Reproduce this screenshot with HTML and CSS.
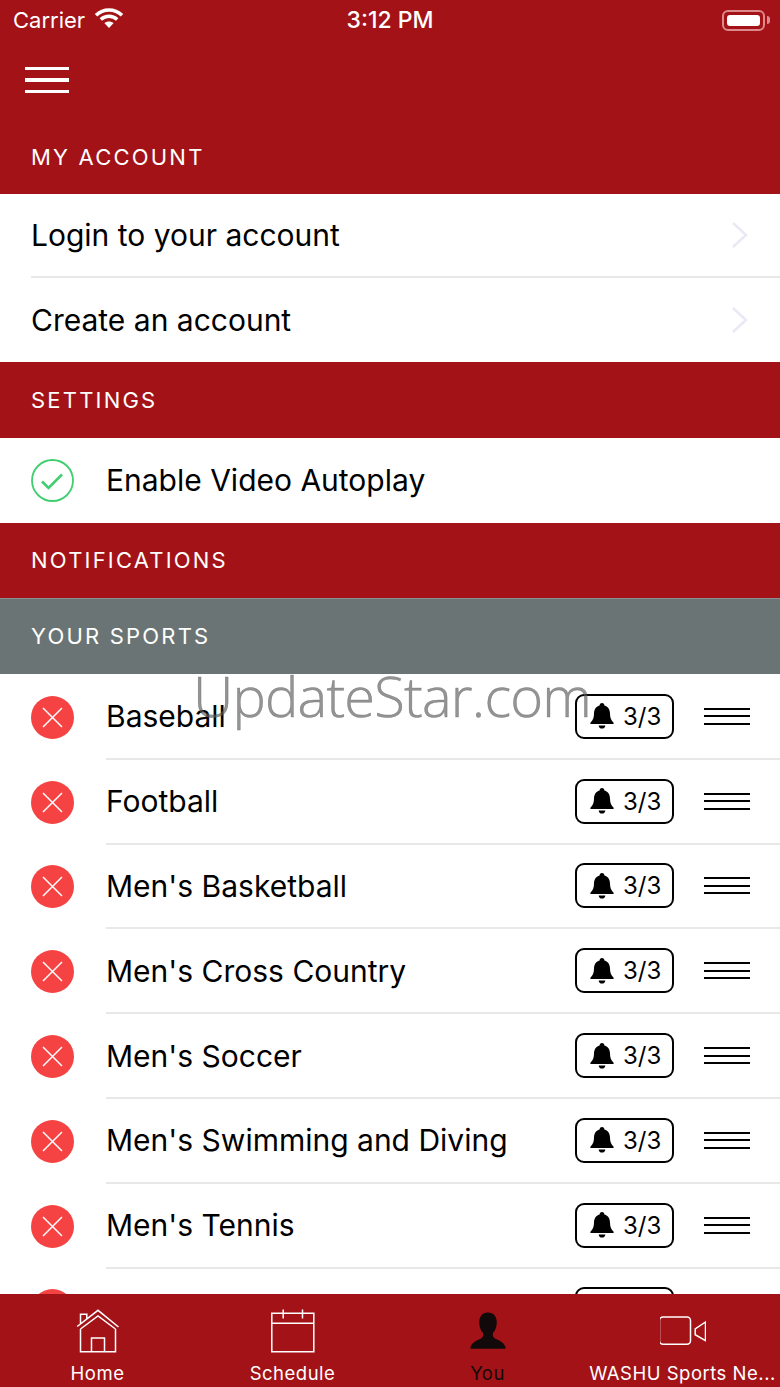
FILE: index.html
```html
<!DOCTYPE html>
<html lang="en">
<head>
  <meta charset="UTF-8" />
  <meta name="viewport" content="width=device-width, initial-scale=1.0"/>
  <title>You</title>
  <link rel="stylesheet" href="styles.css">
</head>
<body>
  <div class="app">
    <header class="top">
      <div class="status-bar">
        <div class="status-left">
          <span>Carrier</span>
          <svg class="wifi" width="30" height="22" viewBox="0 0 30 22"><path d="M2 8.2C9.500 1.200 20.500 1.200 28 8.200" fill="none" stroke="#fff" stroke-width="3.600"/><path d="M6.800 12.600C11.500 8.200 18.500 8.200 23.200 12.600" fill="none" stroke="#fff" stroke-width="3.400"/><path d="M15 21l-4.700-4.900c2.700-2.200 6.700-2.200 9.400 0z" fill="#fff"/></svg>
        </div>
        <div class="status-time">3:12 PM</div>
        <div class="status-right">
          <div class="battery"><div class="battery-level"></div></div>
          <div class="battery-tip"></div>
        </div>
      </div>
      <div class="toolbar">
        <button class="menu-btn" aria-label="Menu"><span></span><span></span><span></span></button>
      </div>
      <h2 class="section section-first">MY ACCOUNT</h2>
    </header>

    <main class="content">
      <a class="link-row"><span class="row-text">Login to your account</span>
        <svg class="chevron" width="18" height="28" viewBox="0 0 18 28"><path d="M2 2l13 12L2 26" fill="none" stroke="#e9e9f6" stroke-width="2.500"/></svg>
      </a>
      <a class="link-row"><span class="row-text">Create an account</span>
        <svg class="chevron" width="18" height="28" viewBox="0 0 18 28"><path d="M2 2l13 12L2 26" fill="none" stroke="#e9e9f6" stroke-width="2.500"/></svg>
      </a>
      <h2 class="section">SETTINGS</h2>
      <div class="setting-row">
        <svg class="round-icon" width="43" height="43" viewBox="0 0 43 43"><circle cx="21.500" cy="21.500" r="20.500" fill="none" stroke="#3fcf70" stroke-width="1.800"/><path d="M11 22.500l6.500 6.500L31 15.500" fill="none" stroke="#3fcf70" stroke-width="2.500"/></svg>
        <span class="row-text">Enable Video Autoplay</span>
      </div>
      <h2 class="section">NOTIFICATIONS</h2>
      <h2 class="section section-gray">YOUR SPORTS</h2>

      <ul class="sports">
        <li class="sport"><svg class="round-icon" width="43" height="43" viewBox="0 0 43 43"><circle cx="21.500" cy="21.500" r="21.500" fill="#f54242"/><path d="M12 12l19 19M31 12L12 31" stroke="#fff" stroke-width="1.500"/></svg>
          <div class="sport-body"><span class="row-text">Baseball</span><span class="alert-btn"><svg class="bell" width="24" height="26" viewBox="0 0 24 26"><path d="M12 0c1.500 0 2.400 1 2.400 2.400 3.900 1 5.600 4.300 5.600 8.200 0 4.200 1 6.700 3.600 9.100v1.300H.4v-1.300C3 17.300 4 14.800 4 10.600c0-3.900 1.700-7.200 5.600-8.200C9.600 1 10.500 0 12 0zM8.700 22.500h6.600c0 1.900-1.400 3.100-3.300 3.100s-3.300-1.200-3.300-3.100z" fill="#000"/></svg>3/3</span><span class="drag"><i></i><i></i><i></i></span></div></li>
        <li class="sport"><svg class="round-icon" width="43" height="43" viewBox="0 0 43 43"><circle cx="21.500" cy="21.500" r="21.500" fill="#f54242"/><path d="M12 12l19 19M31 12L12 31" stroke="#fff" stroke-width="1.500"/></svg>
          <div class="sport-body"><span class="row-text">Football</span><span class="alert-btn"><svg class="bell" width="24" height="26" viewBox="0 0 24 26"><path d="M12 0c1.500 0 2.400 1 2.400 2.400 3.900 1 5.600 4.300 5.600 8.200 0 4.200 1 6.700 3.600 9.100v1.300H.4v-1.300C3 17.300 4 14.800 4 10.600c0-3.900 1.700-7.200 5.600-8.200C9.600 1 10.500 0 12 0zM8.700 22.500h6.600c0 1.900-1.400 3.100-3.300 3.100s-3.300-1.200-3.300-3.100z" fill="#000"/></svg>3/3</span><span class="drag"><i></i><i></i><i></i></span></div></li>
        <li class="sport"><svg class="round-icon" width="43" height="43" viewBox="0 0 43 43"><circle cx="21.500" cy="21.500" r="21.500" fill="#f54242"/><path d="M12 12l19 19M31 12L12 31" stroke="#fff" stroke-width="1.500"/></svg>
          <div class="sport-body"><span class="row-text">Men's Basketball</span><span class="alert-btn"><svg class="bell" width="24" height="26" viewBox="0 0 24 26"><path d="M12 0c1.500 0 2.400 1 2.400 2.400 3.900 1 5.600 4.300 5.600 8.200 0 4.200 1 6.700 3.600 9.100v1.300H.4v-1.300C3 17.300 4 14.800 4 10.600c0-3.900 1.700-7.200 5.600-8.200C9.600 1 10.500 0 12 0zM8.700 22.500h6.600c0 1.900-1.400 3.100-3.300 3.100s-3.300-1.200-3.300-3.100z" fill="#000"/></svg>3/3</span><span class="drag"><i></i><i></i><i></i></span></div></li>
        <li class="sport"><svg class="round-icon" width="43" height="43" viewBox="0 0 43 43"><circle cx="21.500" cy="21.500" r="21.500" fill="#f54242"/><path d="M12 12l19 19M31 12L12 31" stroke="#fff" stroke-width="1.500"/></svg>
          <div class="sport-body"><span class="row-text">Men's Cross Country</span><span class="alert-btn"><svg class="bell" width="24" height="26" viewBox="0 0 24 26"><path d="M12 0c1.500 0 2.400 1 2.400 2.400 3.900 1 5.600 4.300 5.600 8.200 0 4.200 1 6.700 3.600 9.100v1.300H.4v-1.300C3 17.300 4 14.800 4 10.600c0-3.900 1.700-7.200 5.600-8.200C9.600 1 10.500 0 12 0zM8.700 22.500h6.600c0 1.900-1.400 3.100-3.300 3.100s-3.300-1.200-3.300-3.100z" fill="#000"/></svg>3/3</span><span class="drag"><i></i><i></i><i></i></span></div></li>
        <li class="sport"><svg class="round-icon" width="43" height="43" viewBox="0 0 43 43"><circle cx="21.500" cy="21.500" r="21.500" fill="#f54242"/><path d="M12 12l19 19M31 12L12 31" stroke="#fff" stroke-width="1.500"/></svg>
          <div class="sport-body"><span class="row-text">Men's Soccer</span><span class="alert-btn"><svg class="bell" width="24" height="26" viewBox="0 0 24 26"><path d="M12 0c1.500 0 2.400 1 2.400 2.400 3.900 1 5.600 4.300 5.600 8.200 0 4.200 1 6.700 3.600 9.100v1.300H.4v-1.300C3 17.300 4 14.800 4 10.600c0-3.900 1.700-7.200 5.600-8.200C9.600 1 10.500 0 12 0zM8.700 22.500h6.600c0 1.900-1.400 3.100-3.300 3.100s-3.300-1.200-3.300-3.100z" fill="#000"/></svg>3/3</span><span class="drag"><i></i><i></i><i></i></span></div></li>
        <li class="sport"><svg class="round-icon" width="43" height="43" viewBox="0 0 43 43"><circle cx="21.500" cy="21.500" r="21.500" fill="#f54242"/><path d="M12 12l19 19M31 12L12 31" stroke="#fff" stroke-width="1.500"/></svg>
          <div class="sport-body"><span class="row-text">Men's Swimming and Diving</span><span class="alert-btn"><svg class="bell" width="24" height="26" viewBox="0 0 24 26"><path d="M12 0c1.500 0 2.400 1 2.400 2.400 3.900 1 5.600 4.300 5.600 8.200 0 4.200 1 6.700 3.600 9.100v1.300H.4v-1.300C3 17.300 4 14.800 4 10.600c0-3.900 1.700-7.200 5.600-8.200C9.600 1 10.500 0 12 0zM8.700 22.500h6.600c0 1.900-1.400 3.100-3.300 3.100s-3.300-1.200-3.300-3.100z" fill="#000"/></svg>3/3</span><span class="drag"><i></i><i></i><i></i></span></div></li>
        <li class="sport"><svg class="round-icon" width="43" height="43" viewBox="0 0 43 43"><circle cx="21.500" cy="21.500" r="21.500" fill="#f54242"/><path d="M12 12l19 19M31 12L12 31" stroke="#fff" stroke-width="1.500"/></svg>
          <div class="sport-body"><span class="row-text">Men's Tennis</span><span class="alert-btn"><svg class="bell" width="24" height="26" viewBox="0 0 24 26"><path d="M12 0c1.500 0 2.400 1 2.400 2.400 3.900 1 5.600 4.300 5.600 8.200 0 4.200 1 6.700 3.600 9.100v1.300H.4v-1.300C3 17.300 4 14.800 4 10.600c0-3.900 1.700-7.200 5.600-8.200C9.600 1 10.500 0 12 0zM8.700 22.500h6.600c0 1.900-1.400 3.100-3.300 3.100s-3.300-1.200-3.300-3.100z" fill="#000"/></svg>3/3</span><span class="drag"><i></i><i></i><i></i></span></div></li>
        <li class="sport"><svg class="round-icon" width="43" height="43" viewBox="0 0 43 43"><circle cx="21.500" cy="21.500" r="21.500" fill="#f54242"/><path d="M12 12l19 19M31 12L12 31" stroke="#fff" stroke-width="1.500"/></svg>
          <div class="sport-body"><span class="alert-btn"></span><span class="drag"><i></i><i></i><i></i></span></div></li>
      </ul>
    </main>

    <nav class="tabbar">
      <a class="tab">
        <svg width="46" height="48" viewBox="0 0 46 48"><path d="M2.200 20.500L23 4.300 43.500 21M5.500 23L23 10l17.500 13M5.500 23v22.700h35V23M16.500 45.700V32h13v13.700M5.500 18V8.300h6.300v5.200" fill="none" stroke="#fff" stroke-width="1.500"/></svg>
        <span class="tab-label">Home</span>
      </a>
      <a class="tab">
        <svg width="46" height="48" viewBox="0 0 46 48"><path d="M1.800 7.300h42v38.400h-42zM1.800 17.300h42M13.200 3.500v9M32.500 3.500v9" fill="none" stroke="#fff" stroke-width="1.500"/></svg>
        <span class="tab-label">Schedule</span>
      </a>
      <a class="tab tab-active">
        <svg width="46" height="48" viewBox="0 0 46 48"><path d="M23 6.500c5.600 0 8.800 4 8.800 10 0 4.200-1.500 8-3.800 10.600-.5 2 0 4 1.500 5.200 3.200 1.800 9 3 11 8.800v1.600H5.500v-1.600c2-5.800 7.800-7 11-8.800 1.500-1.200 2-3.200 1.500-5.200-2.300-2.600-3.800-6.400-3.800-10.600 0-6 3.200-10 8.800-10z" fill="#120a0a"/></svg>
        <span class="tab-label">You</span>
      </a>
      <a class="tab">
        <svg width="46" height="48" viewBox="0 0 46 48"><rect x="-.5" y="11" width="31" height="27.300" rx="3.500" fill="none" stroke="#fff" stroke-width="1.500"/><path d="M45.500 16L35.200 23v5.700l10.300 6z" fill="none" stroke="#fff" stroke-width="1.500"/></svg>
        <span class="tab-label">WASHU Sports Ne...</span>
      </a>
    </nav>

    <div class="watermark">UpdateStar.com</div>
  </div>
</body>
</html>
```

FILE: styles.css
```css
* {
  box-sizing: border-box;
}
body {
  margin: 0;
  font-family: 'Inter', 'Liberation Sans', sans-serif;
  background-color: #fff;
  color: #000;
}
.app {
  position: relative;
  width: 780px;
  height: 1387px;
  overflow: hidden;
  display: flex;
  flex-direction: column;
}
.top {
  flex-shrink: 0;
  background-color: #a31217;
  color: #fff;
}
.status-bar {
  height: 40px;
  padding: 0 13px;
  display: grid;
  grid-template-columns: 1fr auto 1fr;
  align-items: center;
  font-size: 22px;
}
.status-left {
  display: flex;
  align-items: center;
  gap: 9px;
}
.wifi {
  margin-top: -4px;
}
.status-time {
  font-size: 23px;
  font-weight: 500;
}
.status-right {
  display: flex;
  justify-content: flex-end;
  align-items: center;
  gap: 2px;
  margin-right: -3px;
}
.battery {
  width: 43px;
  height: 21px;
  padding: 3px;
  border: 2px solid #de8a8c;
  border-radius: 6px;
}
.battery-level {
  height: 100%;
  background-color: #fff;
  border-radius: 3px;
}
.battery-tip {
  width: 3px;
  height: 8px;
  background-color: #de8a8c;
  border-radius: 0 3px 3px 0;
}
.toolbar {
  height: 80px;
  padding-left: 25px;
  display: flex;
  align-items: center;
}
.menu-btn {
  width: 44px;
  padding: 0;
  border: none;
  background: none;
  display: flex;
  flex-direction: column;
  gap: 8px;
}
.menu-btn span {
  height: 3.500px;
  background-color: #fff;
}
.section {
  margin: 0;
  height: 75.500px;
  padding-left: 31px;
  display: flex;
  align-items: center;
  background-color: #a31217;
  color: #fff;
  font-size: 22px;
  font-weight: 400;
  letter-spacing: 2.200px;
}
.section-first {
  height: 74px;
}
.section-gray {
  background-color: #6b7474;
  border-top: 1px solid #8a9090;
}
.content {
  flex: 1;
  min-height: 0;
  overflow: hidden;
}
.row-text {
  font-size: 30px;
  white-space: nowrap;
}
.link-row {
  height: 84px;
  margin-left: 31px;
  padding-right: 31px;
  display: flex;
  align-items: center;
  justify-content: space-between;
  border-bottom: 2px solid #e8e8e8;
}
.link-row:nth-child(2) {
  border-bottom: none;
}
.setting-row {
  height: 85px;
  padding-left: 31px;
  display: flex;
  align-items: center;
  gap: 32px;
}
.round-icon {
  flex-shrink: 0;
}
.sports {
  margin: 0;
  padding: 1.500px 0 0;
  list-style: none;
}
.sport {
  height: 84.800px;
  padding-left: 31px;
  display: flex;
  align-items: center;
  gap: 32px;
}
.sport-body {
  flex: 1;
  align-self: stretch;
  padding-right: 30px;
  display: flex;
  align-items: center;
  border-bottom: 2px solid #e8e8e8;
}
.alert-btn {
  width: 99px;
  height: 45px;
  margin-left: auto;
  padding-left: 13px;
  display: flex;
  align-items: center;
  gap: 9px;
  border: 2px solid #000;
  border-radius: 9px;
  font-size: 24px;
}
.drag {
  width: 46px;
  margin-left: 30px;
  display: flex;
  flex-direction: column;
  gap: 5.500px;
}
.drag i {
  height: 2px;
  background-color: #000;
}
.tabbar {
  flex-shrink: 0;
  height: 93px;
  padding-top: 12px;
  display: flex;
  background-color: #a31217;
  color: #fff;
}
.tab {
  flex: 1;
  display: flex;
  flex-direction: column;
  align-items: center;
  gap: 8px;
}
.tab-label {
  font-size: 18.500px;
  letter-spacing: .5px;
  white-space: nowrap;
}
.tab-active {
  color: #120a0a;
}
.watermark {
  position: absolute;
  top: 657px;
  left: 193px;
  font-family: 'Open Sans', sans-serif;
  font-weight: 300;
  font-size: 56px;
  letter-spacing: -.8px;
  -webkit-text-stroke: .5px rgba(90, 90, 90, .6);
  color: rgba(90, 90, 90, .65);
  white-space: nowrap;
}
```
